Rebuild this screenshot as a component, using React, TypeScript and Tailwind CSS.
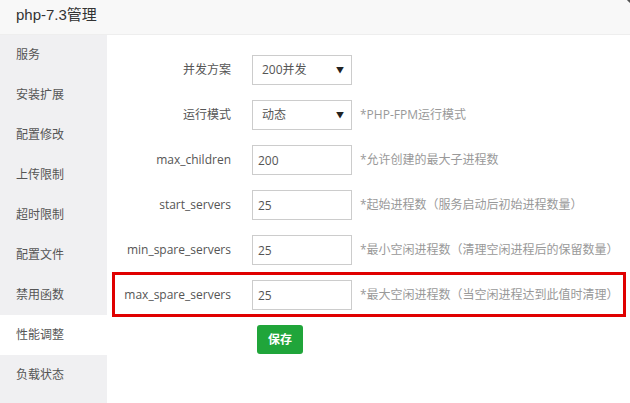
import React from 'react';

const menu = ['服务', '安装扩展', '配置修改', '上传限制', '超时限制', '配置文件', '禁用函数', '性能调整', '负载状态'];

type Row = { label: string; value: string; select?: boolean; hint?: string };

const rows: Row[] = [
  { label: '并发方案', value: '200并发', select: true },
  { label: '运行模式', value: '动态', select: true, hint: '*PHP-FPM运行模式' },
  { label: 'max_children', value: '200', hint: '*允许创建的最大子进程数' },
  { label: 'start_servers', value: '25', hint: '*起始进程数（服务启动后初始进程数量）' },
  { label: 'min_spare_servers', value: '25', hint: '*最小空闲进程数（清理空闲进程后的保留数量）' },
  { label: 'max_spare_servers', value: '25', hint: '*最大空闲进程数（当空闲进程达到此值时清理）' },
];

const FormRow: React.FC<{ row: Row }> = ({ row }) => (
  <div className="flex items-center h-[30px] mb-[15px]">
    <label className="w-[124px] text-right text-[12px] text-[#555] whitespace-nowrap">{row.label}</label>
    <div className="ml-[21px] w-[100px] h-[30px] border border-[#ccc] bg-white flex items-center text-[12px] text-[#555]">
      {row.select ? (
        <div className="flex items-center justify-between w-full pl-[9px] pr-[7px]">
          <span>{row.value}</span>
          <span className="text-[8px] text-[#222]">▼</span>
        </div>
      ) : (
        <input
          className="w-full h-full px-[5px] outline-none bg-transparent"
          defaultValue={row.value}
        />
      )}
    </div>
    {row.hint && <span className="ml-[8px] text-[12px] text-[#999] whitespace-nowrap">{row.hint}</span>}
  </div>
);

const App: React.FC = () => {
  return (
    <div
      className="relative w-[630px] h-[403px] overflow-hidden bg-white"
      style={{ fontFamily: '"Open Sans", "Noto Sans CJK SC", sans-serif' }}
    >
      <div
        className="h-[35px] bg-[#f8f8f8] border-b border-[#eee] flex items-center pl-[16px] pb-[3px] text-[15px] text-[#333]"
        style={{ fontFamily: '"Liberation Sans", "Noto Sans CJK SC", sans-serif' }}
      >
        php-7.3管理
      </div>
      <div className="flex h-[368px]">
        <div className="w-[107px] bg-[#f0f0f2] flex flex-col">
          {menu.map((m) => (
            <div
              key={m}
              className={`h-[40px] flex items-center pl-[16px] text-[12px] text-[#555] ${m === '性能调整' ? 'bg-white' : ''}`}
            >
              {m}
            </div>
          ))}
        </div>
        <div className="flex-1 pt-[20px]">
          {rows.map((r) => (
            <FormRow key={r.label} row={r} />
          ))}
          <div className="ml-[150px]">
            <button className="h-[29px] w-[46px] rounded-[3px] bg-[#20a53a] text-white text-[12px] font-bold">
              保存
            </button>
          </div>
        </div>
      </div>
      <div className="absolute left-[112px] top-[272px] w-[514px] h-[45px] border-[3px] border-[#e00000] pointer-events-none" />
      <div className="absolute right-[-24px] top-[-24px] w-[30px] h-[30px] rounded-full bg-[#555]" />
    </div>
  );
};

export default App;
